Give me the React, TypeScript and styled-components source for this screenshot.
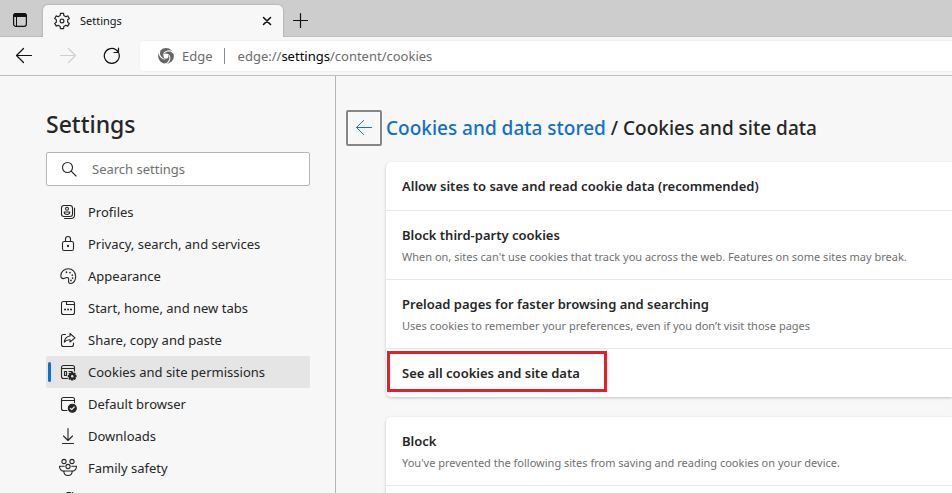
import React from "react";
import styled, { createGlobalStyle } from "styled-components";

const GlobalStyle = createGlobalStyle`
  *, *::before, *::after { box-sizing: border-box; }
  body {
    margin: 0;
    background: #f7f7f7;
    color: #262626;
    font-family: "Noto Sans", "Open Sans", sans-serif;
    font-size: 13px;
    line-height: 20px;
  }
  button, input { font: inherit; color: inherit; }
  h1, h2, p, ul { margin: 0; padding: 0; }
`;

const Window = styled.div`
  display: flex;
  flex-direction: column;
  height: 100vh;
  overflow: hidden;
`;

const TabStrip = styled.header`
  display: flex;
  align-items: flex-end;
  flex: none;
  height: 37px;
  background: #cdcdcd;
  border-bottom: 1px solid #bdbdbd;
`;

const IconButton = styled.button<{ $width: number; $height: number }>`
  display: flex;
  flex: none;
  align-items: center;
  justify-content: center;
  width: ${(p) => p.$width}px;
  height: ${(p) => p.$height}px;
  padding: 0;
  border: 0;
  background: transparent;
  color: #111;
  &:disabled { color: #cfcfcf; }
`;

const TabActions = styled.div`
  flex: none;
  width: 43px;
  padding: 0 3px 0 0;
`;

const Tab = styled.div`
  display: flex;
  align-items: center;
  flex: 0 1 240px;
  height: 32px;
  margin-bottom: -1px;
  padding: 0 4px 0 10px;
  background: #f7f7f7;
  border-radius: 5px 5px 0 0;
  box-shadow: 0 0 2px rgba(0, 0, 0, 0.3);
  clip-path: inset(-3px -3px 0 -3px);
`;

const TabTitle = styled.span`
  flex: 1;
  padding-left: 9px;
  color: #111;
  font-size: 11px;
`;

const Toolbar = styled.div`
  display: flex;
  align-items: center;
  flex: none;
  height: 39px;
  padding-left: 2px;
  border-bottom: 1px solid #bdbdbd;
`;

const AddressBar = styled.div`
  display: flex;
  align-items: center;
  flex: 1;
  height: 30px;
  margin-left: 6px;
  padding-left: 18px;
  background: #fff;
  border-radius: 4px 0 0 4px;
  box-shadow: 0 0 2px rgba(0, 0, 0, 0.08);
  color: #6b6b6b;
`;

const SiteName = styled.span`
  margin-left: 8px;
  padding-right: 11px;
`;

const Divider = styled.span`
  width: 1px;
  height: 16px;
  margin-right: 13px;
  background: #8a8a8a;
`;

const UrlStrong = styled.span`
  color: #000;
`;

const Page = styled.div`
  display: flex;
  flex: 1;
  min-height: 0;
`;

const Sidebar = styled.aside`
  flex: none;
  width: 336px;
  padding: 32px 25px 0 46px;
  border-right: 1px solid #b5b5b5;
`;

const SidebarTitle = styled.h1`
  font-size: 23px;
  line-height: 32px;
  font-weight: 500;
`;

const SearchBox = styled.label`
  display: flex;
  align-items: center;
  height: 34px;
  margin: 12px 0 10px;
  padding-left: 14px;
  background: #fff;
  border: 1px solid #b5b5b5;
  border-radius: 2px;
`;

const SearchInput = styled.input`
  flex: 1;
  min-width: 0;
  margin-left: 15px;
  padding: 0;
  border: 0;
  outline: 0;
  background: transparent;
  &::placeholder { color: #707070; opacity: 1; }
`;

const NavList = styled.ul`
  list-style: none;
`;

const NavLink = styled.a<{ $active?: boolean }>`
  position: relative;
  display: flex;
  align-items: center;
  gap: 10px;
  height: 32px;
  padding-left: 12px;
  border-radius: 2px;
  color: inherit;
  text-decoration: none;
  background: ${(p) => (p.$active ? "#e5e5e5" : "transparent")};
  &::before {
    content: "";
    display: ${(p) => (p.$active ? "block" : "none")};
    position: absolute;
    left: 2px;
    top: 6px;
    width: 3px;
    height: 20px;
    border-radius: 2px;
    background: #0f6fd0;
  }
`;

const Main = styled.main`
  flex: 1;
  min-width: 0;
  padding: 34px 0 0 10px;
`;

const Heading = styled.div`
  display: flex;
  align-items: center;
  gap: 4px;
  height: 36px;
`;

const BackButton = styled.button`
  display: flex;
  align-items: center;
  justify-content: center;
  width: 36px;
  height: 36px;
  padding: 0;
  border: 2px solid #868686;
  border-radius: 2px;
  background: transparent;
  color: #1473cf;
`;

const Crumbs = styled.h2`
  font-size: 19px;
  line-height: 28px;
  font-weight: 500;
  white-space: nowrap;
`;

const CrumbLink = styled.a`
  color: #1070cb;
  text-decoration: none;
`;

const Cards = styled.div`
  display: flex;
  flex-direction: column;
  gap: 20px;
  padding: 16px 0 0 40px;
`;

const Card = styled.section`
  background: #fff;
  border-radius: 5px 0 0 5px;
  box-shadow: 0 1px 3px rgba(0, 0, 0, 0.22);
`;

const Row = styled.div`
  position: relative;
  padding: 14px 16px;
  white-space: nowrap;
  & + & { border-top: 1px solid #e8e8e8; }
`;

const RowTitle = styled.div`
  font-weight: 600;
`;

const RowNote = styled.p`
  padding-top: 4px;
  color: #707070;
  font-size: 11px;
  line-height: 16px;
`;

const RowButton = styled.button`
  display: block;
  padding: 0;
  border: 0;
  background: transparent;
  font-weight: 600;
`;

const Marker = styled.span`
  position: absolute;
  left: 1px;
  top: 2px;
  width: 220px;
  height: 41px;
  border: 3px solid #ed1c24;
  pointer-events: none;
`;

const Svg = ({ size = 20, box = 20, sw = 1.1, children }: { size?: number; box?: number; sw?: number; children: React.ReactNode }) => (
  <svg width={size} height={size} viewBox={`0 0 ${box} ${box}`} fill="none" stroke="currentColor" strokeWidth={sw} strokeLinecap="round" strokeLinejoin="round" aria-hidden="true">
    {children}
  </svg>
);

const gearPath = (cx: number, cy: number, outer: number, inner: number, teeth: number) => {
  const points: string[] = [];
  const step = (Math.PI * 2) / teeth;
  for (let i = 0; i < teeth; i++) {
    const a = i * step - Math.PI / 2;
    [[-0.3, inner], [-0.2, outer], [0.2, outer], [0.3, inner]].forEach(([k, r]) => {
      points.push(`${(cx + r * Math.cos(a + k * step)).toFixed(2)} ${(cy + r * Math.sin(a + k * step)).toFixed(2)}`);
    });
  }
  return `M${points.join("L")}Z`;
};

const TabActionsIcon = () => (
  <Svg size={16} box={16} sw={1.2}>
    <rect x="1.6" y="1.6" width="12.8" height="12.8" rx="2.4" />
    <path d="M1.6 4.500V4a2.4 2.4 0 0 1 2.4-2.4h8a2.4 2.4 0 0 1 2.4 2.4v.5z" fill="currentColor" />
    <path d="M4.500 5v9.4" strokeWidth="1" />
  </Svg>
);
const GearIcon = () => (
  <Svg size={18} box={18} sw={1.2}>
    <path d={gearPath(9, 9, 7.7, 5.8, 6)} />
    <circle cx="9" cy="9" r="1.9" />
  </Svg>
);
const ArrowLeft = ({ sw = 1.2 }: { sw?: number }) => (
  <Svg size={18} box={18} sw={sw}><path d="M16.500 8.500h-15M8.500 1.500l-7 7 7 7" /></Svg>
);
const ArrowRight = () => (
  <Svg size={18} box={18} sw={1.2}><path d="M1.500 8.500h15M9.500 1.500l7 7-7 7" /></Svg>
);
const Reload = () => (
  <Svg size={18} box={18} sw={1.2}><path d="M15.900 6.500A7.500 7.500 0 1 1 13 2.700L15.500 5M15.500 1v4.500H11" /></Svg>
);
const EdgeLogo = () => (
  <svg width="16" height="16" viewBox="0 0 16 16" aria-hidden="true">
    <circle cx="8" cy="8" r="7.900" fill="#666" />
    <circle cx="8" cy="8" r="2.500" fill="#fff" />
    {[0, 120, 240].map((angle) => (
      <path key={angle} transform={`rotate(${angle} 8 8)`} d="M5.500 8.200C5.600 4.800 8.700 3 12 3.600c1.300.3 2.300 1 3.200 2.100l.8-.6C14.600 2.900 12.300 2 10 2.400 6.500 3 4.600 5.300 5.500 8.200z" fill="#fff" />
    ))}
  </svg>
);

const navIcons = {
  profiles: (
    <>
      <rect x="3.500" y="3.500" width="11" height="11" rx="2.500" />
      <circle cx="9" cy="6.800" r="1.500" />
      <path d="M6.200 10h5.600c0 1.700-1.100 2.500-2.800 2.500S6.200 11.700 6.200 10z" />
      <path d="M16.500 6v7a3.500 3.500 0 0 1-3.500 3.500H6.500" />
    </>
  ),
  lock: (
    <>
      <rect x="4.500" y="7.500" width="11" height="9" rx="1.800" />
      <path d="M7.500 7.500V5a2.500 2.500 0 0 1 5 0v2.500" />
      <circle cx="10" cy="12" r=".6" fill="currentColor" />
    </>
  ),
  palette: (
    <>
      <path d="M2.800 9.800C3 5.600 6.300 2.700 10.200 2.700c4.200 0 7.500 3.300 7.500 7.500 0 4-2 7.300-4.900 7.300-2 0-2.500-1.300-2.200-2.900.4-2.200-.3-3.400-1.900-3.100-1 .2-1.600.7-2.700 1-1.800.4-3.300-.7-3.200-2.700z" />
      <path d="M8.500 6.200v.1M12 6.500v.1M14.300 9v.1M14.600 12v.1M13 14.300v.1" strokeWidth="1.700" />
    </>
  ),
  home: (
    <>
      <rect x="3.500" y="3.500" width="13" height="13" rx="2" />
      <path d="M8.500 3.500v3h8" />
      <path d="M7 11.500h.1M10 11.500h.1M13 11.500h.1" strokeWidth="1.900" />
    </>
  ),
  share: (
    <>
      <path d="M7.500 4.500h-2a2 2 0 0 0-2 2v8a2 2 0 0 0 2 2h8a2 2 0 0 0 2-2V13" />
      <path d="M12 3.500l5 4.300-5 4.200V9.800c-2.400-.2-4.200.7-5.700 2.400.4-3.500 2.300-5.800 5.700-6.200z" />
    </>
  ),
  cookies: (
    <>
      <path d="M9.500 16.500h-4a2 2 0 0 1-2-2v-9a2 2 0 0 1 2-2h9a2 2 0 0 1 2 2v3.500M3.500 6.500h13" />
      <path d="M6.500 9.500h2v4h-2zM11 9.500h3" />
      <path d={gearPath(14.2, 14.2, 3.9, 2.8, 8)} fill="currentColor" />
      <circle cx="14.200" cy="14.200" r="1.200" fill="#e5e5e5" stroke="none" />
    </>
  ),
  browser: (
    <>
      <path d="M9 16.500H5.500a2 2 0 0 1-2-2v-9a2 2 0 0 1 2-2h9a2 2 0 0 1 2 2v3.300M3.500 6.500h13" />
      <circle cx="14.300" cy="14.200" r="4" fill="currentColor" />
      <path d="M12.400 14.400l1.300 1.300 2.500-2.700" stroke="#f7f7f7" strokeWidth="1.200" />
    </>
  ),
  download: (
    <>
      <path d="M10 2.500v12M5.500 10l4.500 4.500 4.500-4.500" />
      <path d="M4.500 17.500h11" />
    </>
  ),
  family: (
    <>
      <circle cx="6" cy="3.500" r="2.100" />
      <circle cx="14" cy="3.500" r="2.100" />
      <circle cx="10" cy="8.500" r="2.100" />
      <path d="M5.800 13.300C3.500 13 1.500 11.500 1.500 8.300h4.700M14.200 13.300c2.300-.3 4.300-1.800 4.300-5h-4.700" />
      <path d="M5.800 13h8.400c0 3-1.500 4.500-4.200 4.500S5.800 16 5.800 13z" />
    </>
  ),
  language: (
    <>
      <path d="M9 2.500h3.500M14.500 2.500v3" />
      <path d="M5 9h8M9 9v8" />
    </>
  ),
};

const navItems: { icon: keyof typeof navIcons; label: string; active?: boolean }[] = [
  { icon: "profiles", label: "Profiles" },
  { icon: "lock", label: "Privacy, search, and services" },
  { icon: "palette", label: "Appearance" },
  { icon: "home", label: "Start, home, and new tabs" },
  { icon: "share", label: "Share, copy and paste" },
  { icon: "cookies", label: "Cookies and site permissions", active: true },
  { icon: "browser", label: "Default browser" },
  { icon: "download", label: "Downloads" },
  { icon: "family", label: "Family safety" },
];

export default function App() {
  return (
    <Window>
      <GlobalStyle />
      <TabStrip>
        <TabActions>
          <IconButton $width={40} $height={32} aria-label="Tab actions"><TabActionsIcon /></IconButton>
        </TabActions>
        <Tab>
          <GearIcon />
          <TabTitle>Settings</TabTitle>
          <IconButton $width={24} $height={24} aria-label="Close tab">
            <Svg size={10} box={10} sw={1.6}><path d="M1.500 1.500l7 7M8.500 1.500l-7 7" /></Svg>
          </IconButton>
        </Tab>
        <IconButton $width={34} $height={32} aria-label="New tab">
          <Svg size={16} box={16} sw={1.2}><path d="M8.500 1.500v14M1.500 8.500h14" /></Svg>
        </IconButton>
      </TabStrip>

      <Toolbar>
        <IconButton $width={44} $height={36} aria-label="Back"><ArrowLeft /></IconButton>
        <IconButton $width={44} $height={36} aria-label="Forward" disabled><ArrowRight /></IconButton>
        <IconButton $width={44} $height={36} aria-label="Refresh"><Reload /></IconButton>
        <AddressBar>
          <EdgeLogo />
          <SiteName>Edge</SiteName>
          <Divider />
          <span>edge://<UrlStrong>settings</UrlStrong>/content/cookies</span>
        </AddressBar>
      </Toolbar>

      <Page>
        <Sidebar>
          <SidebarTitle>Settings</SidebarTitle>
          <SearchBox>
            <Svg size={16} box={16}><circle cx="6.500" cy="6.500" r="5" /><path d="M10.200 10.200l4.800 4.800" /></Svg>
            <SearchInput type="search" placeholder="Search settings" aria-label="Search settings" />
          </SearchBox>
          <nav>
            <NavList>
              {navItems.map((item) => (
                <li key={item.label}>
                  <NavLink href="#" $active={item.active} aria-current={item.active ? "page" : undefined}>
                    <Svg>{navIcons[item.icon]}</Svg>
                    {item.label}
                  </NavLink>
                </li>
              ))}
              <li>
                <NavLink href="#" aria-label="Languages">
                  <Svg>{navIcons.language}</Svg>
                </NavLink>
              </li>
            </NavList>
          </nav>
        </Sidebar>

        <Main>
          <Heading>
            <BackButton aria-label="Go back"><ArrowLeft sw={1} /></BackButton>
            <Crumbs><CrumbLink href="#">Cookies and data stored</CrumbLink> / Cookies and site data</Crumbs>
          </Heading>
          <Cards>
            <Card>
              <Row><RowTitle>Allow sites to save and read cookie data (recommended)</RowTitle></Row>
              <Row>
                <RowTitle>Block third-party cookies</RowTitle>
                <RowNote>When on, sites can't use cookies that track you across the web. Features on some sites may break.</RowNote>
              </Row>
              <Row>
                <RowTitle>Preload pages for faster browsing and searching</RowTitle>
                <RowNote>Uses cookies to remember your preferences, even if you don’t visit those pages</RowNote>
              </Row>
              <Row>
                <RowButton>See all cookies and site data</RowButton>
                <Marker />
              </Row>
            </Card>
            <Card>
              <Row>
                <RowTitle>Block</RowTitle>
                <RowNote>You've prevented the following sites from saving and reading cookies on your device.</RowNote>
              </Row>
              <Row><RowTitle>&nbsp;</RowTitle></Row>
            </Card>
          </Cards>
        </Main>
      </Page>
    </Window>
  );
}
